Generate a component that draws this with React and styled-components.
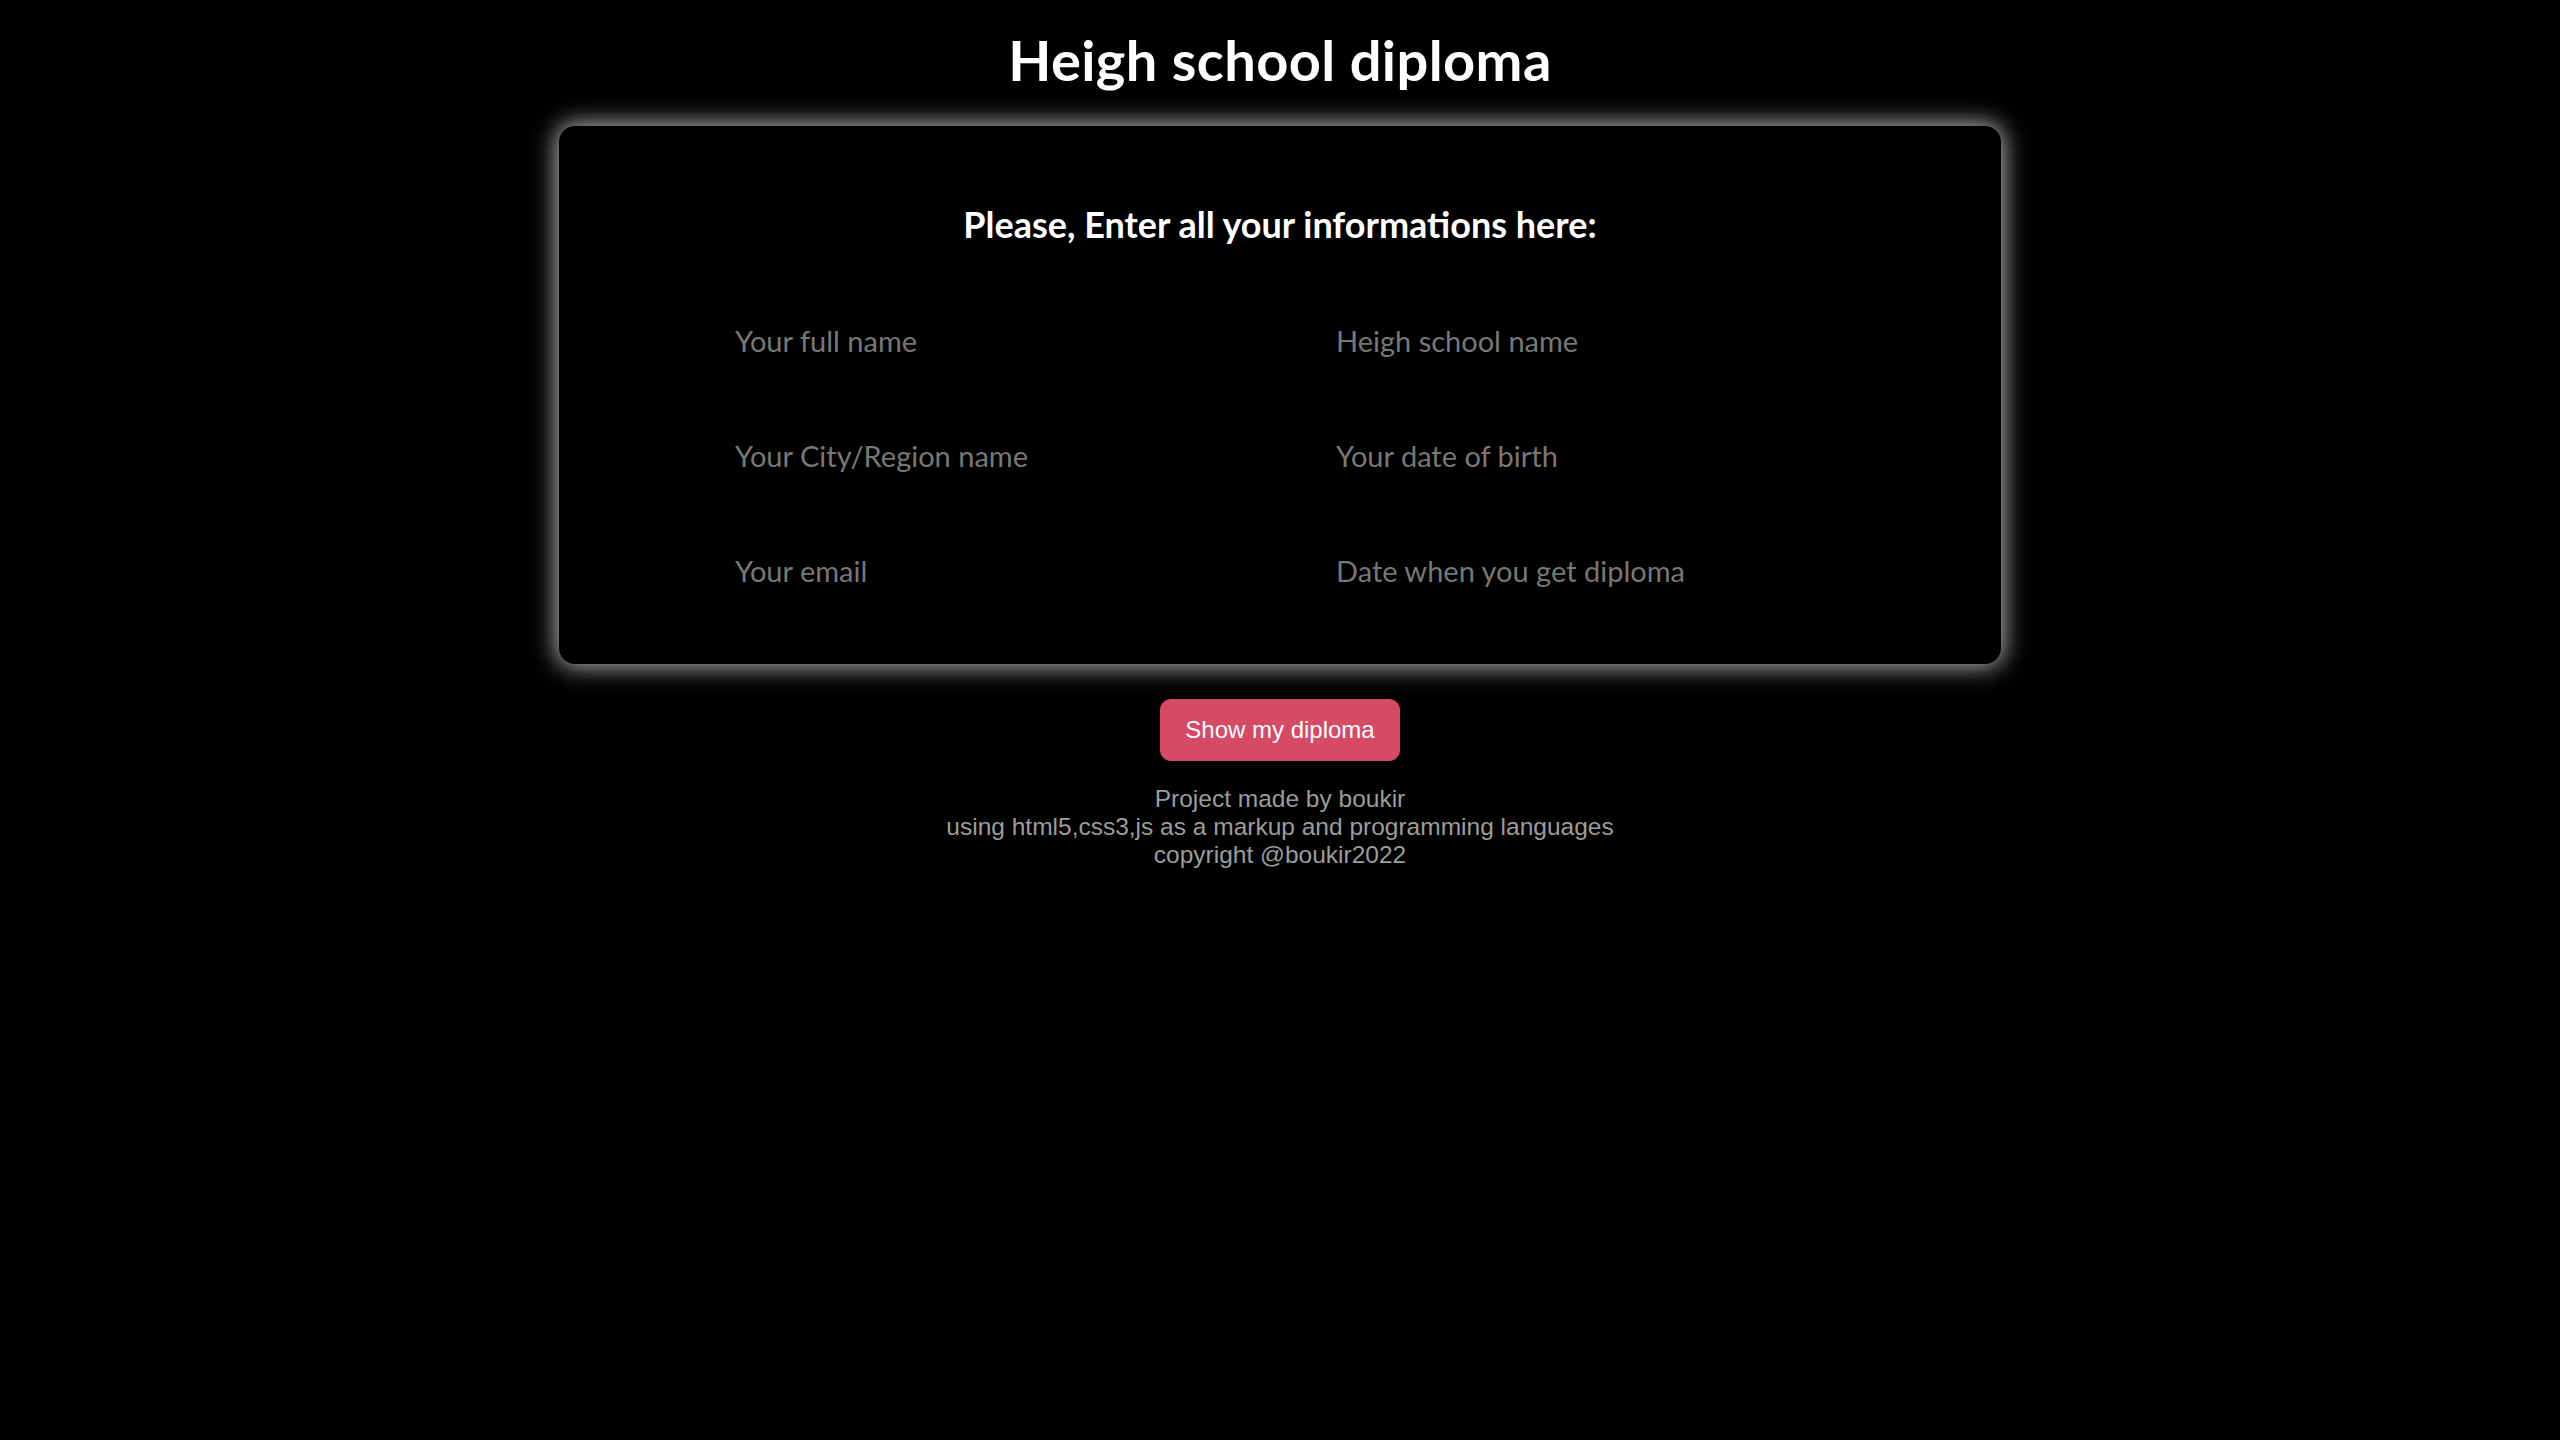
import React from "react";
import styled, { createGlobalStyle } from "styled-components";

const Global = createGlobalStyle`
  html, body {
    margin: 0;
    padding: 0;
    background: #000;
  }
  body {
    font-family: "Liberation Sans", Arial, sans-serif;
  }
`;

const Page = styled.main`
  display: flex;
  flex-direction: column;
  align-items: center;
  min-height: 1440px;
  background: #000;
  padding-top: 26px;
  box-sizing: border-box;
`;

const Title = styled.h1`
  margin: 0;
  font-family: Lato, "Noto Sans", sans-serif;
  font-weight: 700;
  font-size: 56px;
  line-height: 1.2;
  color: #fff;
  letter-spacing: 0.4px;
`;

const Card = styled.section`
  margin-top: 33px;
  width: 1442px;
  box-sizing: border-box;
  background: #000;
  border-radius: 16px;
  box-shadow: 0 0 24px 2px rgba(255, 255, 255, 0.75);
  padding: 77px 176px 64px;
  display: flex;
  flex-direction: column;
  align-items: center;
`;

const Heading = styled.h2`
  margin: 0 0 64px;
  font-family: Lato, "Noto Sans", sans-serif;
  font-weight: 700;
  font-size: 36px;
  line-height: 1.2;
  color: #fff;
`;

const Grid = styled.div`
  align-self: stretch;
  display: grid;
  grid-template-columns: 1fr 1fr;
  column-gap: 112px;
  row-gap: 55px;
`;

const Field = styled.input`
  height: 60px;
  padding: 0;
  border: none;
  outline: none;
  background: transparent;
  color: #fff;
  font-family: Lato, "Noto Sans", sans-serif;
  font-size: 29px;
  &::placeholder {
    color: #777;
  }
`;

const Button = styled.button`
  margin-top: 35px;
  height: 62px;
  padding: 0 25px;
  border: none;
  border-radius: 11px;
  background: #d64a66;
  color: #fff;
  font-family: "Liberation Sans", Arial, sans-serif;
  font-size: 24px;
  cursor: pointer;
`;

const Footer = styled.footer`
  margin-top: 24px;
  text-align: center;
  color: #9c9c9c;
  font-family: "Liberation Sans", Arial, sans-serif;
  font-size: 24.5px;
  line-height: 28px;
`;

const fields = [
  "Your full name",
  "Heigh school name",
  "Your City/Region name",
  "Your date of birth",
  "Your email",
  "Date when you get diploma",
];

export default function App() {
  return (
    <>
      <Global />
      <Page>
        <Title>Heigh school diploma</Title>
        <Card>
          <Heading>Please, Enter all your informations here:</Heading>
          <Grid>
            {fields.map((f) => (
              <Field key={f} type="text" placeholder={f} />
            ))}
          </Grid>
        </Card>
        <Button>Show my diploma</Button>
        <Footer>
          Project made by boukir
          <br />
          using html5,css3,js as a markup and programming languages
          <br />
          copyright @boukir2022
        </Footer>
      </Page>
    </>
  );
}
